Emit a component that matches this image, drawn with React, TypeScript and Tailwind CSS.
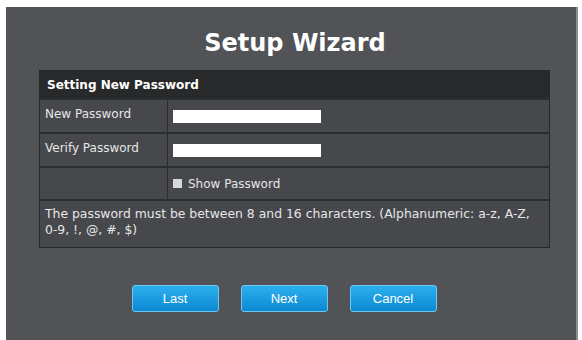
export default function App() {
  const font = { fontFamily: '"DejaVu Sans", Verdana, sans-serif' };
  return (
    <div className="w-[582px] h-[340px] bg-white overflow-hidden pl-[6px] pt-[7px] pr-[4px]" style={font}>
      <div className="h-full bg-[#515357] border-r-2 border-[#8a8c90] flex flex-col">
        <h1 className="mt-[20px] h-[32px] text-center text-[24px] leading-[32px] font-bold text-white pl-[8px]">
          Setup Wizard
        </h1>

        <div className="mt-[11px] ml-[33px] w-[511px] border border-[#27282a] bg-[#46484c] text-[12px] text-[#e6e6e6]">
          <div className="h-[27px] bg-[#28292b] flex items-center pl-[7px] font-bold text-white">
            Setting New Password
          </div>
          <div className="grid grid-cols-[128px_1fr] h-[34px] border-t-2 border-[#2c2d2f]">
            <div className="border-r border-[#2c2d2f] pl-[5px] flex items-center pb-[4px]">New Password</div>
            <div className="flex items-center pl-[5px]">
              <div className="w-[148px] h-[13px] bg-white"></div>
            </div>
          </div>
          <div className="grid grid-cols-[128px_1fr] h-[34px] border-t-2 border-[#2c2d2f]">
            <div className="border-r border-[#2c2d2f] pl-[5px] flex items-center pb-[4px]">Verify Password</div>
            <div className="flex items-center pl-[5px]">
              <div className="w-[148px] h-[13px] bg-white"></div>
            </div>
          </div>
          <div className="grid grid-cols-[128px_1fr] h-[33px] border-t-2 border-[#2c2d2f]">
            <div className="border-r border-[#2c2d2f]"></div>
            <div className="flex items-center pl-[5px] gap-[6px]">
              <div className="w-[9px] h-[9px] bg-[#d8d8d8]"></div>
              <span>Show Password</span>
            </div>
          </div>
          <div className="h-[48px] border-t-2 border-[#2c2d2f] pl-[5px] pt-[5px] leading-[16px] text-[12.4px]">
            The password must be between 8 and 16 characters. (Alphanumeric: a-z, A-Z,
            <br />
            0-9, !, @, #, $)
          </div>
        </div>

        <div className="mt-[37px] flex justify-center gap-[22px] pr-[14px]">
          {["Last", "Next", "Cancel"].map((t) => (
            <button
              key={t}
              className="w-[87px] h-[27px] rounded-[3px] border border-[#6cc8f2] bg-gradient-to-b from-[#2bb0ee] to-[#0c88d2] text-white text-[13px]"
              style={{ fontFamily: '"Liberation Sans Narrow", "Liberation Sans", Arial, sans-serif' }}
            >
              {t}
            </button>
          ))}
        </div>
      </div>
    </div>
  );
}
